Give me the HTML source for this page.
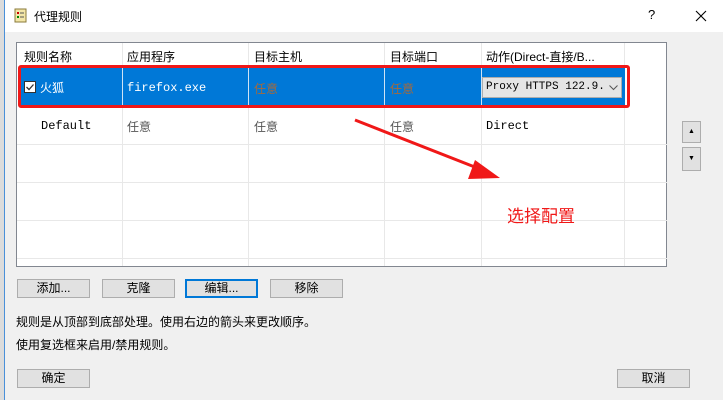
<!DOCTYPE html>
<html><head><meta charset="utf-8"><style>
*{margin:0;padding:0;box-sizing:border-box}
body{width:723px;height:400px;overflow:hidden;background:#f0f0f0;font-family:"Liberation Sans","Noto Sans CJK SC",sans-serif;font-size:12px;color:#000;position:relative}
.a{position:absolute}
.mono{font-family:"Liberation Mono","Noto Sans CJK SC",monospace;font-size:12px}
.btn{position:absolute;height:19px;border:1px solid #adadad;background:#e1e1e1;text-align:center;line-height:17px;font-size:12px}
.vl{position:absolute;width:1px;background:#e8e8e8}
.hl{position:absolute;height:1px;background:#e8e8e8;left:17px;width:650px}
</style></head><body>
<div class="a" style="left:0;top:0;width:4px;height:400px;background:#dcdcdc"></div>
<div class="a" style="left:4px;top:0;width:1px;height:400px;background:#4a90d9"></div>
<div class="a" style="left:5px;top:0;width:718px;height:32px;background:#fff"></div>
<svg class="a" style="left:13px;top:8px" width="16" height="16"><rect x="2" y="1" width="11" height="13" fill="#f3e6a8" stroke="#8a7a3a"/><rect x="4" y="4" width="2" height="2" fill="#c00"/><rect x="4" y="8" width="2" height="2" fill="#080"/><line x1="7" y1="5" x2="11" y2="5" stroke="#555"/><line x1="7" y1="9" x2="11" y2="9" stroke="#555"/></svg>
<div class="a" style="left:34px;top:8px;font-size:12px">代理规则</div>
<div class="a" style="left:648px;top:7px;font-size:13px">?</div>
<svg class="a" style="left:333px;top:10px;left:333px;display:none" width="1" height="1"></svg>
<svg class="a" style="left:695px;top:10px" width="12" height="12"><path d="M1 1 L11 11 M11 1 L1 11" stroke="#000" stroke-width="1.1"/></svg>

<div class="a" style="left:16px;top:42px;width:651px;height:225px;background:#fff;border:1px solid #828790"></div>
<div class="vl" style="left:122px;top:43px;height:223px"></div>
<div class="vl" style="left:248px;top:43px;height:223px"></div>
<div class="vl" style="left:384px;top:43px;height:223px"></div>
<div class="vl" style="left:481px;top:43px;height:223px"></div>
<div class="vl" style="left:624px;top:43px;height:223px"></div>
<div class="hl" style="top:144px"></div><div class="hl" style="top:182px"></div><div class="hl" style="top:220px"></div><div class="hl" style="top:258px"></div>
<div class="a" style="left:24px;top:48px">规则名称</div>
<div class="a" style="left:127px;top:48px">应用程序</div>
<div class="a" style="left:254px;top:48px">目标主机</div>
<div class="a" style="left:390px;top:48px">目标端口</div>
<div class="a" style="left:486px;top:48px">动作(Direct-直接/B...</div>

<div class="a" style="left:20px;top:68px;width:605px;height:38px;background:#0078d7"></div>
<div class="a" style="left:122px;top:68px;width:1px;height:38px;background:#cfe3f5"></div>
<div class="a" style="left:248px;top:68px;width:1px;height:38px;background:#cfe3f5"></div>
<div class="a" style="left:384px;top:68px;width:1px;height:38px;background:#cfe3f5"></div>
<div class="a" style="left:481px;top:68px;width:1px;height:38px;background:#cfe3f5"></div>
<div class="a" style="left:24px;top:81px;width:12px;height:12px;background:#fff;border:1px solid #333"></div>
<svg class="a" style="left:25px;top:82px" width="10" height="10"><path d="M1.5 5 L4 7.5 L8.5 2.5" stroke="#333" stroke-width="1.3" fill="none"/></svg>
<div class="a" style="left:40px;top:79px;color:#fff">火狐</div>
<div class="a mono" style="left:127px;top:81px;color:#fff">firefox.exe</div>
<div class="a" style="left:254px;top:80px;color:#a46a3c">任意</div>
<div class="a" style="left:390px;top:80px;color:#a46a3c">任意</div>
<div class="a mono" style="left:482px;top:77px;width:140px;height:21px;background:#e5e5e5;border:1px solid #adadad;padding:3px 0 0 3px;color:#000;overflow:hidden;white-space:nowrap;font-size:11px;padding-right:16px">Proxy HTTPS 122.9.51</div>
<div class="a" style="left:605px;top:78px;width:16px;height:19px;background:#e5e5e5"></div>
<svg class="a" style="left:609px;top:85px" width="9" height="6"><path d="M0.5 0.5 L4.5 4.5 L8.5 0.5" stroke="#555" fill="none"/></svg>
<div class="a" style="left:18px;top:65px;width:612px;height:43px;border:3px solid #f01818;border-radius:3px"></div>

<div class="a mono" style="left:41px;top:119px">Default</div>
<div class="a" style="left:127px;top:118px;color:#555">任意</div>
<div class="a" style="left:254px;top:118px;color:#555">任意</div>
<div class="a" style="left:390px;top:118px;color:#555">任意</div>
<div class="a mono" style="left:486px;top:119px">Direct</div>

<svg class="a" style="left:350px;top:115px" width="160" height="75"><line x1="5" y1="5" x2="140" y2="58" stroke="#f01818" stroke-width="3"/><polygon points="150,63 125,45 118,64" fill="#f01818"/></svg>
<div class="a" style="left:507px;top:202px;font-size:17px;color:#f01818">选择配置</div>

<div class="btn" style="left:682px;top:121px;width:19px;height:22px;font-size:7px;line-height:20px">▲</div>
<div class="btn" style="left:682px;top:147px;width:19px;height:24px;font-size:7px;line-height:22px">▼</div>

<div class="btn" style="left:17px;top:279px;width:73px">添加...</div>
<div class="btn" style="left:102px;top:279px;width:73px">克隆</div>
<div class="btn" style="left:185px;top:279px;width:73px;border:2px solid #0078d7;line-height:15px">编辑...</div>
<div class="btn" style="left:270px;top:279px;width:73px">移除</div>
<div class="a" style="left:16px;top:313px">规则是从顶部到底部处理。使用右边的箭头来更改顺序。</div>
<div class="a" style="left:16px;top:336px">使用复选框来启用/禁用规则。</div>
<div class="btn" style="left:17px;top:369px;width:73px">确定</div>
<div class="btn" style="left:617px;top:369px;width:73px">取消</div>
</body></html>
